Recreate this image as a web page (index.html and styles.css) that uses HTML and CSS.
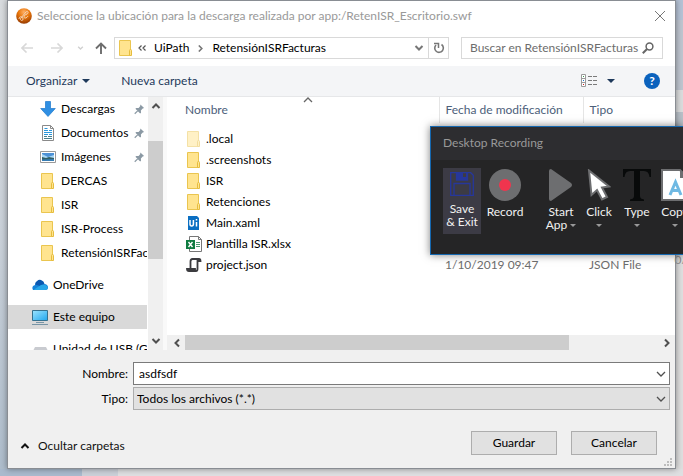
FILE: index.html
```html
<!DOCTYPE html>
<html lang="es">
<head>
<meta charset="utf-8">
<title>Guardar como</title>
<link rel="stylesheet" href="styles.css">
</head>
<body>
<svg class="defs" aria-hidden="true">
  <symbol id="folder" viewBox="0 0 16 16"><path d="M1.5.5h11v15h-11z" fill="#ffe48f" stroke="#eac54f"/><path d="M11.5 15.500v-5q0-1 1-1t1 1v5z" fill="#ffe48f" stroke="#e6bd3e"/></symbol>
  <symbol id="pin" viewBox="0 0 12 12"><path d="M7 1l4 4-1.500.5-2 2 .2 2.500-1 1L1.500 5.800l1-1 2.500.2 1.700-2z" fill="#8b99a4"/><path d="M4 8L.8 11.200" stroke="#8b99a4" stroke-width="1.300"/></symbol>
  <symbol id="chev" viewBox="0 0 10 6"><path d="M1 1l4 4 4-4" fill="none" stroke="currentColor" stroke-width="1.300"/></symbol>
  <symbol id="chev-bold" viewBox="0 0 10 6"><path d="M1.500 1L5 4.500 8.500 1" fill="none" stroke="currentColor" stroke-width="2"/></symbol>
  <symbol id="drop" viewBox="0 0 8 4"><path d="M0 0h8L4 4z" fill="currentColor"/></symbol>
</svg>
<div class="desktop">
  <main class="dialog">
    <header class="titlebar">
      <svg class="i16" viewBox="0 0 16 16"><defs><radialGradient id="orb" cx=".5" cy=".25" r=".8"><stop offset="0" stop-color="#ffb066"/><stop offset=".45" stop-color="#e87509"/><stop offset="1" stop-color="#8a3200"/></radialGradient></defs><circle cx="8" cy="8" r="7.800" fill="url(#orb)"/><path d="M3 11c0-3 4-3 4 0s-4 1-2-1l5-6c2-2 3 1 1 2s-3 1-3 3 3 1 4-1" fill="none" stroke="#f3d3b5" stroke-width="1"/></svg>
      <h1>Seleccione la ubicación para la descarga realizada por app:/RetenISR_Escritorio.swf</h1>
      <button class="plain" aria-label="Cerrar"><svg class="close" viewBox="0 0 10 10"><path d="M0 0l10 10M10 0L0 10" stroke="#777"/></svg></button>
    </header>
    <nav class="navbar">
      <button class="plain back" aria-label="Atrás"><svg width="12" height="10" viewBox="0 0 12 10"><path d="M12 5H1M5.500.5L1 5l4.500 4.500" fill="none" stroke="#d8d8d8" stroke-width="1.600"/></svg></button>
      <button class="plain forward" aria-label="Adelante"><svg width="12" height="10" viewBox="0 0 12 10"><path d="M0 5h11M6.500.5L11 5 6.500 9.500" fill="none" stroke="#d8d8d8" stroke-width="1.600"/></svg></button>
      <button class="plain recent" aria-label="Ubicaciones recientes"><svg width="7" height="4"><use href="#chev-bold"/></svg></button>
      <button class="plain up" aria-label="Arriba"><svg width="12" height="12" viewBox="0 0 12 12"><path d="M6 12V1M1 6.500L6 1.500l5 5" fill="none" stroke="#6d6d6d" stroke-width="1.900"/></svg></button>
      <div class="address">
        <svg class="i16"><use href="#folder"/></svg>
        <svg class="crumb-first" width="8" height="6" viewBox="0 0 8 6"><path d="M3.500.5L1 3l2.500 2.500M7.500.5L5 3l2.500 2.500" fill="none" stroke="#555" stroke-width="1.200"/></svg>
        <a href="#">UiPath</a>
        <svg class="crumb-sep" width="5" height="7" viewBox="0 0 5 7"><path d="M.8.5l3 3-3 3" fill="none" stroke="#777" stroke-width="1.600"/></svg>
        <a href="#">RetensiónISRFacturas</a>
        <button class="plain history" aria-label="Historial"><svg width="10" height="6"><use href="#chev-bold"/></svg></button>
        <button class="plain refresh" aria-label="Actualizar"><svg width="12" height="12" viewBox="0 0 12 12"><path d="M8.500 2.500A4.300 4.300 0 1 1 3 3" fill="none" stroke="#777" stroke-width="1.600"/><path d="M1 1.500h4.500V6" fill="none" stroke="#777" stroke-width="1.500"/></svg></button>
      </div>
      <div class="search">
        <input type="text" aria-label="Buscar" placeholder="Buscar en RetensiónISRFacturas">
        <svg width="12" height="12" viewBox="0 0 12 12"><circle cx="7.500" cy="4.500" r="3.400" fill="none" stroke="#666" stroke-width="1.500"/><path d="M5 7L.8 11.200" stroke="#666" stroke-width="2"/></svg>
      </div>
    </nav>
    <div class="toolbar">
      <button class="plain">Organizar <svg class="drop"><use href="#drop"/></svg></button>
      <button class="plain new">Nueva carpeta</button>
      <button class="plain view" aria-label="Cambiar vista"><svg width="17" height="14" viewBox="0 0 17 14"><path d="M.5.500h4v12h-4zM.5 4.500h4M.5 8.500h4" fill="#fff" stroke="#9a9a9a"/><path d="M2 2h1v1H2z" fill="#3a9a50"/><path d="M2 6h1v1H2z" fill="#1d72d0"/><path d="M2 10h1v1H2z" fill="#c22"/><path d="M7 2.500h4M12 2.500h4M7 6.500h4M12 6.500h4M7 10.500h4M12 10.500h4" stroke="#7a7a7a"/></svg><svg class="drop"><use href="#drop"/></svg></button>
      <button class="plain help" aria-label="Ayuda">?</button>
    </div>
    <section class="browser">
      <aside class="sidebar">
        <ul class="places">
          <li><svg class="i16" viewBox="0 0 16 16"><path d="M5.500.5h5v7h4.800L8 15.500.7 7.500h4.800z" fill="#2f8fe3" stroke="#1c78cc" stroke-width=".7"/></svg><span>Descargas</span><svg class="pin"><use href="#pin"/></svg></li>
          <li><svg class="i16" viewBox="0 0 16 16"><path d="M2.500.5h8l3 3v12h-11z" fill="#fff" stroke="#8a8a8a"/><path d="M10.500.5v3h3" fill="none" stroke="#8a8a8a"/><path d="M4.500 3.500h3M4 5.500h4M9 5.500h3M4 7.500h8M4 9.500h4M9 9.500h3" stroke="#2a97dc"/><path d="M4 11.500h3M8 11.500h4M4 13.500h8" stroke="#477e8d"/></svg><span>Documentos</span><svg class="pin"><use href="#pin"/></svg></li>
          <li><svg class="i16" viewBox="0 0 16 16"><path d="M.5 2.500h15v11H.5z" fill="#fff" stroke="#999"/><path d="M2 4h12v8H2z" fill="#a9d7f5"/><path d="M2 4h12v2L8 8 2 5z" fill="#4c91d6"/><path d="M2 8l4 1 3-1 5 1v3H2z" fill="#315f65"/><path d="M2 10.500l12-.5v2H2z" fill="#357cb3"/></svg><span>Imágenes</span><svg class="pin"><use href="#pin"/></svg></li>
          <li><svg class="i16"><use href="#folder"/></svg><span>DERCAS</span></li>
          <li><svg class="i16"><use href="#folder"/></svg><span>ISR</span></li>
          <li><svg class="i16"><use href="#folder"/></svg><span>ISR-Process</span></li>
          <li><svg class="i16"><use href="#folder"/></svg><span>RetensiónISRFacturas</span></li>
          <li class="root"><svg class="i16" viewBox="0 0 16 16"><path d="M1 13q-2-4 2-5 1-5 6-4 3 1 3 3 4 0 4 3.500Q16 13 13 13z" fill="#1683d8"/><path d="M3 7.500Q5 2 9 3q3 1 3.500 4L8 9z" fill="#0b58b0"/><path d="M2 12.500L9 8q3-1.500 6 1 2 4-2 4H3z" fill="#29a7e8"/></svg><span>OneDrive</span></li>
          <li class="root selected"><svg class="i16" viewBox="0 0 16 16"><defs><linearGradient id="scr" x2="1" y2="1"><stop offset="0" stop-color="#9ce4ff"/><stop offset="1" stop-color="#20a6ee"/></linearGradient></defs><path d="M.5 1.500h15v10H.5z" fill="url(#scr)" stroke="#35718f"/><path d="M4 13.500h8M0 15.500h16" stroke="#7895a6"/></svg><span>Este equipo</span></li>
          <li class="root"><svg class="i16" viewBox="0 0 16 16"><path d="M3 6h11l2 4v4H1v-4z" fill="#c9cbd0"/></svg><span>Unidad de USB (G:)</span></li>
        </ul>
        <div class="vscroll"><svg class="sarrow up-arrow"><use href="#chev-bold"/></svg><div class="vthumb"></div><svg class="sarrow"><use href="#chev-bold"/></svg></div>
      </aside>
      <div class="files">
        <table>
          <colgroup><col class="c-name"><col class="c-date"><col></colgroup>
          <thead><tr><th>Nombre<svg class="sort"><use href="#chev"/></svg></th><th>Fecha de modificación</th><th>Tipo</th></tr></thead>
          <tbody>
            <tr><td><div class="file"><svg class="i16 faded"><use href="#folder"/></svg>.local</div></td><td></td><td></td></tr>
            <tr><td><div class="file"><svg class="i16"><use href="#folder"/></svg>.screenshots</div></td><td></td><td></td></tr>
            <tr><td><div class="file"><svg class="i16"><use href="#folder"/></svg>ISR</div></td><td></td><td></td></tr>
            <tr><td><div class="file"><svg class="i16"><use href="#folder"/></svg>Retenciones</div></td><td></td><td></td></tr>
            <tr><td><div class="file"><svg class="i16" viewBox="0 0 16 16"><path d="M2 1h9l2 2v12H2z" fill="#0b6fc2"/><path d="M4 5v4q0 2 1.700 2t1.700-2V5M10.500 7v4.500M10.500 4v1.500" fill="none" stroke="#fff" stroke-width="1.500"/></svg>Main.xaml</div></td><td></td><td></td></tr>
            <tr><td><div class="file"><svg class="i16" viewBox="0 0 16 16"><path d="M3.500.5h9l3 3v12h-12z" fill="#fff" stroke="#777"/><path d="M12.500.5v3h3" fill="none" stroke="#777"/><path d="M10 6.500h4M10 8.500h4M10 10.500h4" stroke="#4a9a70"/><path d="M0 4h9v9H0z" fill="#107c41"/><path d="M2.500 6l4 5M6.500 6l-4 5" stroke="#fff" stroke-width="1.400"/></svg>Plantilla ISR.xlsx</div></td><td></td><td></td></tr>
            <tr><td><div class="file"><svg class="i16" viewBox="0 0 16 16"><path d="M10 14H3q-2 0-2-2h8q0 2 1 2 1.500 0 1.500-2V3.500Q11.500 2 13 2t1.500 2H12M13 2H6.500Q4.500 2 4.500 4.500V12" fill="none" stroke="#3b3b3f" stroke-width="1.800"/></svg>project.json</div></td><td>1/10/2019 09:47</td><td>JSON File</td></tr>
          </tbody>
        </table>
        <div class="hscroll"><svg class="sarrow left-arrow"><use href="#chev-bold"/></svg><div class="track"><div class="hthumb"></div></div><svg class="sarrow right-arrow"><use href="#chev-bold"/></svg></div>
      </div>
    </section>
    <form class="footer">
      <div class="fields">
        <label for="name">Nombre:</label>
        <div class="combo"><input id="name" type="text" value="asdfsdf"><svg class="caret"><use href="#chev"/></svg></div>
        <label for="type">Tipo:</label>
        <div class="combo"><select id="type"><option>Todos los archivos (*.*)</option></select><svg class="caret"><use href="#chev"/></svg></div>
      </div>
      <div class="actions">
        <button type="button" class="plain hide"><svg class="up-arrow" width="10" height="6"><use href="#chev-bold"/></svg>Ocultar carpetas</button>
        <button type="button" class="btn">Guardar</button>
        <button type="button" class="btn">Cancelar</button>
      </div>
      <svg class="grip" viewBox="0 0 8 8"><path d="M6 0h2v2H6zM3 3h2v2H3zM6 3h2v2H6zM0 6h2v2H0zM3 6h2v2H3zM6 6h2v2H6z" fill="#bdbdbd"/></svg>
    </form>
  </main>
  <span class="behind">0/</span>
</div>
<section class="recorder">
  <h2>Desktop Recording</h2>
  <div class="tools">
    <button class="tool active"><svg width="24" height="24" viewBox="0 0 24 24"><path d="M.7.7h20l2.600 2.600v20H.7z M6.500.7v7.500h11V.7M4 23V11.500h16V23" fill="none" stroke="#26379b" stroke-width="1.300"/><path d="M7 1h6v4h3V1h2v7H7z" fill="#26379b"/></svg><span>Save<br>&amp; Exit</span></button>
    <button class="tool record"><svg width="32" height="32" viewBox="0 0 32 32"><circle cx="16" cy="16" r="16" fill="#6d6e70"/><circle cx="16" cy="16" r="6" fill="#f0354e"/></svg><span>Record</span></button>
    <i class="divider"></i>
    <button class="tool start"><svg width="24" height="32" viewBox="0 0 24 32"><path d="M0 2Q0 0 2 0L22 14q2 2 0 4L2 32Q0 32 0 30z" fill="#6d6e70"/></svg><span>Start<br>App <svg class="mini"><use href="#drop" width="6" height="3"/></svg></span></button>
    <button class="tool click"><svg width="24" height="32" viewBox="0 0 24 32"><path d="M2 1.500L22 17.500l-7 1 5 9.500-5 2.500-5-9.500-5.500 5z" fill="#fff" stroke="#6d6e70" stroke-width="2"/></svg><span>Click<br><svg class="mini"><use href="#drop"/></svg></span></button>
    <button class="tool type"><svg width="28" height="32" viewBox="0 0 28 32"><path d="M0 0h28v8h-1.500Q26 2 21 2h-4v25q0 3 4 3.500V32H7v-1.500q4-.5 4-3.500V2H7Q2 2 1.500 8H0z" fill="#080a0a"/></svg><span>Type<br><svg class="mini"><use href="#drop"/></svg></span></button>
    <button class="tool copy"><svg width="28" height="32" viewBox="0 0 28 32"><path d="M1 1h18l8 8v22H1z" fill="#fff" stroke="#6d6e70" stroke-width="2"/><path d="M19 1v8h8" fill="#6d6e70"/><path d="M9 26l5.500-13L20 26M11 21.500h7" fill="none" stroke="#6fb9e3" stroke-width="3"/></svg><span>Copy<br><svg class="mini"><use href="#drop"/></svg></span></button>
  </div>
</section>
</body>
</html>
```
FILE: styles.css
```css
* { box-sizing: border-box; }
body { margin: 0; overflow: hidden; font: 12px/16px Lato, "Open Sans", sans-serif; color: #000; }
button, input, select { font: inherit; color: inherit; }
a { color: inherit; text-decoration: none; }
svg { display: block; flex: none; }
.defs { position: absolute; width: 0; height: 0; }
.i16 { width: 16px; height: 16px; }
.plain { border: 0; padding: 0; background: none; display: flex; align-items: center; }
.desktop { position: relative; min-height: 100vh; display: flex; padding: 0 7px; padding-bottom: 7px; background: linear-gradient(90deg, #a9bacd 0 82px, #cbd0d8 82px 118px, #dedfe1 118px) bottom / 100% 7px no-repeat, linear-gradient(#b5c2d5 0 20px, #bec5cf 20px 90px, #dadbdc 90px 112px, #b9c0c8 112px 220px, #dedede 260px) right / 7px 100% no-repeat, linear-gradient(#d8dbde, #c9d0d8 50%, #adbccb); }
.behind { position: absolute; right: -4px; top: 252px; color: #8b8b8b; }
.dialog { flex: 1; min-width: 0; display: flex; flex-direction: column; background: #fff; border: 1px solid #898d93; box-shadow: 0 0 6px rgba(0,0,0,.4); }
.titlebar { display: flex; align-items: center; height: 29px; padding: 0 10px 0 8px; gap: 5px; }
h1 { flex: 1; margin: 0; font-size: 12px; font-weight: 400; color: #999; white-space: nowrap; }
.close { width: 10px; height: 10px; }
.navbar { display: flex; align-items: center; height: 36px; padding: 0 12px 0 13px; }
.forward { margin-left: 18px; }
.recent { margin-left: 14px; color: #d0d0d0; }
.up { margin-left: 11px; }
.address { flex: 1; min-width: 0; display: flex; align-items: center; height: 22px; margin-left: 7px; border: 1px solid #d9d9d9; padding-left: 3px; }
.crumb-first { margin: 0 8px 0 4px; }
.crumb-sep { margin: 0 9px; }
.history { margin-left: auto; margin-right: 4px; color: #777; }
.refresh { height: 20px; width: 20px; justify-content: center; border-left: 1px solid #d9d9d9; }
.search { width: 202px; display: flex; align-items: center; height: 22px; margin-left: 12px; border: 1px solid #d9d9d9; padding: 0 8px; }
.search input { flex: 1; min-width: 0; border: 0; padding: 0; background: none; outline: 0; }
.search input::placeholder { color: #6d6d6d; opacity: 1; }
.toolbar { display: flex; align-items: center; height: 31px; padding: 0 15px 0 18px; background: #f4f5f7; border-bottom: 1px solid #e6e7e9; color: #1e395b; }
.drop { width: 8px; height: 4px; margin-left: 5px; }
.new { margin-left: 31px; }
.view { margin-left: auto; }
.view .drop { margin-left: 9px; }
.help { width: 16px; height: 16px; margin-left: 29px; border-radius: 50%; background: #0b62bd; color: #fff; font-weight: 700; justify-content: center; }
.browser { flex: 1; min-height: 0; display: flex; }
.sidebar { display: flex; width: 159px; border-right: 4px solid #f9f9f9; overflow: hidden; }
.places { flex: 1; height: 253px; min-width: 0; margin: 0; padding: 0; overflow: hidden; list-style: none; }
.places li { display: flex; align-items: center; height: 24px; padding-left: 32px; gap: 5px; margin-right: 1px; overflow: hidden; white-space: nowrap; }
.places .root { padding-left: 24px; margin-top: 8px; }
.places .selected { background: #d9d9d9; }
.pin { width: 11px; height: 12px; margin-left: auto; margin-right: 2px; }
.vscroll { display: flex; flex-direction: column; align-items: center; width: 15px; background: #f0f0f0; padding: 6px 0; color: #505050; }
.vthumb { align-self: stretch; height: 118px; margin: 32px 0 auto; background: #cdcdcd; }
.sarrow { width: 10px; height: 6px; }
.up-arrow { transform: rotate(180deg); }
.left-arrow { transform: rotate(90deg); }
.right-arrow { transform: rotate(-90deg); }
.files { flex: 1; min-width: 0; display: flex; flex-direction: column; }
table { width: 100%; table-layout: fixed; border-collapse: collapse; }
.c-name { width: 272px; }
.c-date { width: 144px; }
th { position: relative; height: 26px; padding: 0 6px; text-align: left; font-weight: 400; color: #4c607a; border-right: 1px solid #e5e5e5; white-space: nowrap; }
th:last-child { border-right: 0; }
th:first-child { padding-left: 18px; }
.sort { position: absolute; left: 50%; top: 0; width: 10px; height: 6px; transform: rotate(180deg); color: #666; }
thead::after { content: ""; display: block; height: 5px; }
td { height: 21px; padding: 0 6px; color: #6d6d6d; white-space: nowrap; }
td:first-child { padding-left: 19px; color: #000; }
.file { display: flex; align-items: center; gap: 4px; }
.faded { opacity: .5; }
.hscroll { display: flex; align-items: center; height: 15px; margin-top: auto; padding: 0 3px 0 5px; background: #f0f0f0; color: #505050; }
.track { flex: 1; margin: 0 3px; }
.hthumb { width: 81%; height: 15px; background: #cdcdcd; }
.footer { position: relative; height: 118px; padding: 12px 5px 0 8px; background: #f0f0f0; }
.fields { display: grid; grid-template-columns: 112px 1fr; column-gap: 5px; row-gap: 2px; align-items: center; }
.fields label { text-align: right; }
.combo { display: grid; align-items: center; }
.combo > * { grid-area: 1 / 1; }
.combo input, .combo select { width: 100%; height: 23px; margin: 0; padding: 0 5px; border: 1px solid #7a7a7a; border-radius: 0; background: #fff; outline: 0; }
.combo select { appearance: none; padding: 0 3px; border-color: #adadad; background: #e1e1e1; }
.caret { width: 10px; height: 6px; justify-self: end; margin-right: 4px; color: #505050; pointer-events: none; }
.actions { display: flex; align-items: center; gap: 14px; margin-top: 21px; padding-right: 13px; }
.hide { margin: 6px auto 0 4px; gap: 8px; color: #111; }
.btn { width: 86px; height: 24px; padding: 0; border: 1px solid #adadad; background: #e1e1e1; }
.grip { position: absolute; right: 3px; bottom: 2px; width: 8px; height: 8px; }
.recorder { position: absolute; left: 430px; right: 0; top: 126px; overflow: hidden; border: 1px solid #1568b0; border-right: 0; background: #252526; color: #f1f1f1; box-shadow: 0 0 8px rgba(0,0,0,.5); }
.recorder h2 { margin: 0; height: 33px; padding: 8px 12px; background: #2d2d30; color: #999; font-size: 12px; font-weight: 400; }
.tools { display: flex; align-items: flex-start; height: 94px; padding: 8px 12px; }
.tool { display: flex; flex-direction: column; align-items: center; flex: none; width: 38px; height: 66px; padding: 0; border: 0; background: none; line-height: 13px; white-space: nowrap; gap: 4px; }
.tool > svg { margin-top: 1px; }
.active { background: #3c3b45; gap: 6px; }
.active > svg { margin-top: 4px; }
.record { margin-left: 5px; }
.divider { width: 1px; height: 66px; margin-left: 10px; background: #333337; }
.start { margin-left: 8px; }
.mini { display: inline-block; vertical-align: middle; width: 6px; height: 3px; color: #999; }
```
